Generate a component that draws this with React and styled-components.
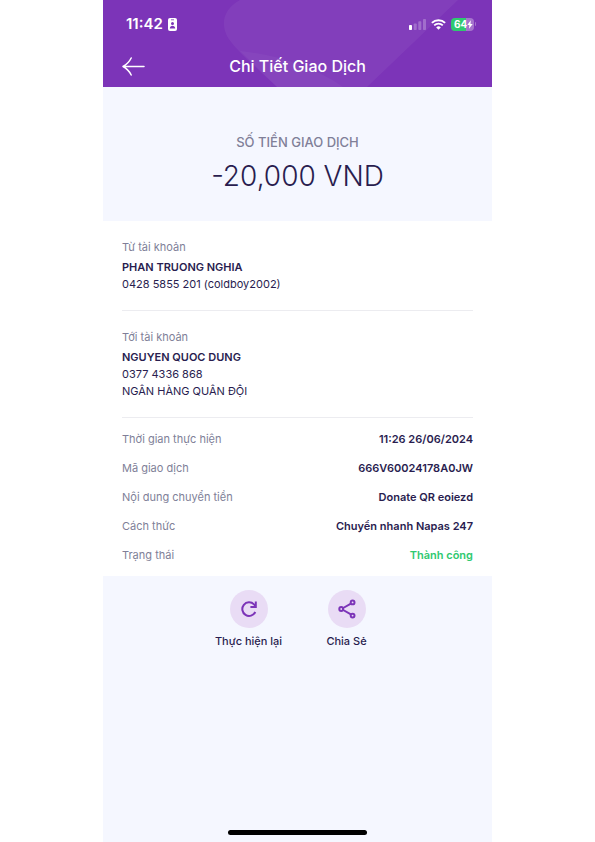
import React from "react";
import styled, { createGlobalStyle } from "styled-components";

const color = {
  purple: "#7c34b8",
  ink: "#291d4f",
  muted: "#807f98",
  wash: "#f5f7ff",
  lilac: "#e9dcf5",
  green: "#2fc970",
};

const GlobalStyle = createGlobalStyle`
  *, *::before, *::after { box-sizing: border-box; }
  body {
    margin: 0;
    background: #fff;
    color: ${color.ink};
    font-family: Inter, "Noto Sans", sans-serif;
    font-size: 11px;
    line-height: 18px;
  }
  h1, h2, p, dl, dt, dd { margin: 0; font-weight: inherit; }
`;

const Screen = styled.div`
  display: flex;
  flex-direction: column;
  width: 100%;
  max-width: 389px;
  min-height: 100vh;
  margin: 0 auto;
  background: ${color.wash};
`;

const Header = styled.header`
  position: relative;
  overflow: hidden;
  padding-top: 12px;
  background: ${color.purple};
  color: #fff;
`;

const HeaderPattern = styled.svg`
  position: absolute;
  inset: 0;
  width: 100%;
  height: 100%;
`;

const StatusBar = styled.div`
  position: relative;
  display: flex;
  align-items: center;
  justify-content: space-between;
  height: 24px;
  padding: 0 16px 0 23px;
`;

const StatusGroup = styled.div`
  display: flex;
  align-items: center;
  gap: 5px;
`;

const Clock = styled.span`
  font-size: 15px;
  font-weight: 600;
`;

const Battery = styled.span`
  display: flex;
  align-items: center;
  gap: 1px;
`;

const BatteryBody = styled.span`
  display: flex;
  align-items: center;
  width: 23px;
  height: 13px;
  padding-left: 3px;
  border-radius: 4px;
  background: linear-gradient(90deg, ${color.green} 66%, #a573cd 66%);
  font-size: 10px;
  line-height: 13px;
  font-weight: 700;
`;

const BatteryTip = styled.span`
  width: 1px;
  height: 4px;
  border-radius: 0 1px 1px 0;
  background: #a573cd;
`;

const TitleBar = styled.div`
  position: relative;
  display: grid;
  grid-template-columns: 24px 1fr 24px;
  align-items: center;
  padding: 18px 19px 9px;
`;

const BackButton = styled.button`
  display: flex;
  padding: 0;
  border: 0;
  background: none;
  color: inherit;
  cursor: pointer;
`;

const Title = styled.h1`
  font-size: 16px;
  line-height: 24px;
  font-weight: 500;
  text-align: center;
`;

const Amount = styled.section`
  padding: 45px 19px 25px;
  text-align: center;
`;

const AmountLabel = styled.h2`
  color: ${color.muted};
  font-size: 13px;
  line-height: 20px;
  font-weight: 500;
`;

const AmountValue = styled.p`
  margin-top: 4px;
  font-size: 28px;
  line-height: 40px;
  font-weight: 300;
`;

const Details = styled.main`
  padding: 0 19px;
  background: #fff;
`;

const Account = styled.section`
  padding: 17px 0;
  border-bottom: 1px solid #ececf0;
`;

const AccountLabel = styled.h2`
  margin-bottom: 3px;
  color: ${color.muted};
  font-size: 11px;
`;

const AccountLine = styled.p`
  line-height: 17px;
`;

const AccountName = styled(AccountLine)`
  font-weight: 600;
`;

const Facts = styled.dl`
  display: flex;
  flex-direction: column;
  gap: 11px;
  padding: 12px 0;
`;

const Fact = styled.div`
  display: flex;
  justify-content: space-between;
  gap: 16px;
`;

const FactLabel = styled.dt`
  color: ${color.muted};
`;

const FactValue = styled.dd`
  color: ${(p) => (p.$success ? color.green : color.ink)};
  font-weight: 600;
  text-align: right;
`;

const Actions = styled.nav`
  display: flex;
  justify-content: center;
  gap: 14px;
  padding-top: 14px;
`;

const Action = styled.button`
  display: flex;
  flex-direction: column;
  align-items: center;
  gap: 4px;
  width: 84px;
  padding: 0;
  border: 0;
  background: none;
  color: ${color.ink};
  font: inherit;
  font-weight: 500;
  white-space: nowrap;
  cursor: pointer;
`;

const ActionIcon = styled.span`
  display: grid;
  place-items: center;
  width: 38px;
  height: 38px;
  border-radius: 50%;
  background: ${color.lilac};
  color: ${color.purple};
`;

const HomeIndicator = styled.div`
  width: 139px;
  height: 5px;
  margin: auto auto 7px;
  border-radius: 3px;
  background: #000;
`;

const facts = [
  { label: "Thời gian thực hiện", value: "11:26 26/06/2024" },
  { label: "Mã giao dịch", value: "666V60024178A0JW" },
  { label: "Nội dung chuyển tiền", value: "Donate QR eoiezd" },
  { label: "Cách thức", value: "Chuyển nhanh Napas 247" },
  { label: "Trạng thái", value: "Thành công", success: true },
];

const Pattern = () => (
  <HeaderPattern viewBox="0 0 389 87" preserveAspectRatio="none" aria-hidden="true">
    <path d="M137 0C122 8 117 22 124 36C130 47 151 66 174 87H264L355 0Z" fill="#fff" fillOpacity="0.05" />
    <path d="M137 51C175 55 211 67 240 87H174Z" fill="#fff" fillOpacity="0.04" />
  </HeaderPattern>
);

const IdIcon = () => (
  <svg width="9" height="13" viewBox="0 0 9 13" aria-hidden="true">
    <rect width="9" height="13" rx="2" fill="#fff" />
    <path d="M3 1.8h3" stroke={color.purple} strokeWidth="0.8" />
    <circle cx="4.5" cy="5.5" r="1.5" fill={color.purple} />
    <path d="M1.8 10.6c0-3.8 5.4-3.8 5.4 0z" fill={color.purple} />
  </svg>
);

const SignalIcon = () => (
  <svg width="17" height="11" viewBox="0 0 17 11" fill="#fff" aria-label="Sóng di động" role="img">
    <rect y="6" width="3" height="5" rx="0.8" />
    <g fillOpacity="0.25">
      <rect x="4.7" y="4.5" width="3" height="6.5" rx="0.8" />
      <rect x="9.3" y="2.3" width="3" height="8.7" rx="0.8" />
      <rect x="14" width="3" height="11" rx="0.8" />
    </g>
  </svg>
);

const WifiIcon = () => (
  <svg width="15" height="11" viewBox="0 0 15 11" fill="none" stroke="#fff" aria-label="Wi-Fi" role="img">
    <path d="M.9 3.9a9.4 9.4 0 0 1 13.2 0" strokeWidth="2" />
    <path d="M3.2 6.4a6.1 6.1 0 0 1 8.6 0" strokeWidth="1.8" />
    <path d="M5.2 8.4a3.3 3.3 0 0 1 4.6 0L7.5 10.8z" fill="#fff" stroke="none" />
  </svg>
);

const BoltIcon = () => (
  <svg width="6" height="9" viewBox="0 0 6 9" fill="#fff" aria-hidden="true">
    <path d="M3.8.3L.3 4.9h2.1L2 8.7l3.7-4.8H3.5z" />
  </svg>
);

const BackIcon = () => (
  <svg width="23" height="19" viewBox="0 0 23 19" fill="none" stroke="currentColor" strokeWidth="1.5" strokeLinecap="round" strokeLinejoin="round" aria-hidden="true">
    <path d="M22 9.5H1M9.2 1C7.5 4.5 4.8 7.5 1 9.5C4.8 11.5 7.5 14.5 9.2 18" />
  </svg>
);

const RepeatIcon = () => (
  <svg width="18" height="18" viewBox="0 0 18 18" fill="none" stroke="currentColor" strokeWidth="2" aria-hidden="true">
    <path d="M15.3 12A6.8 6.8 0 1 1 14 4.4L15.5 6" />
    <path d="M15.8 1.6V7H10.4" />
  </svg>
);

const ShareIcon = () => (
  <svg width="18" height="20" viewBox="0 0 18 20" fill="none" stroke="currentColor" strokeWidth="2" aria-hidden="true">
    <path d="M5.2 9L12.9 4.6M5.2 11L12.9 15.4" />
    <circle cx="3.2" cy="10" r="1.9" />
    <circle cx="14.6" cy="3.4" r="1.9" />
    <circle cx="14.6" cy="16.6" r="1.9" />
  </svg>
);

export default function App() {
  return (
    <>
      <GlobalStyle />
      <Screen>
        <Header>
          <Pattern />
          <StatusBar>
            <StatusGroup>
              <Clock>11:42</Clock>
              <IdIcon />
            </StatusGroup>
            <StatusGroup>
              <SignalIcon />
              <WifiIcon />
              <Battery>
                <BatteryBody>
                  64
                  <BoltIcon />
                </BatteryBody>
                <BatteryTip />
              </Battery>
            </StatusGroup>
          </StatusBar>
          <TitleBar>
            <BackButton type="button" aria-label="Quay lại">
              <BackIcon />
            </BackButton>
            <Title>Chi Tiết Giao Dịch</Title>
          </TitleBar>
        </Header>

        <Amount>
          <AmountLabel>SỐ TIỀN GIAO DỊCH</AmountLabel>
          <AmountValue>-20,000 VND</AmountValue>
        </Amount>

        <Details>
          <Account>
            <AccountLabel>Từ tài khoản</AccountLabel>
            <AccountName>PHAN TRUONG NGHIA</AccountName>
            <AccountLine>0428 5855 201 (coldboy2002)</AccountLine>
          </Account>
          <Account>
            <AccountLabel>Tới tài khoản</AccountLabel>
            <AccountName>NGUYEN QUOC DUNG</AccountName>
            <AccountLine>0377 4336 868</AccountLine>
            <AccountLine>NGÂN HÀNG QUÂN ĐỘI</AccountLine>
          </Account>
          <Facts>
            {facts.map((f) => (
              <Fact key={f.label}>
                <FactLabel>{f.label}</FactLabel>
                <FactValue $success={f.success}>{f.value}</FactValue>
              </Fact>
            ))}
          </Facts>
        </Details>

        <Actions aria-label="Thao tác">
          <Action type="button">
            <ActionIcon>
              <RepeatIcon />
            </ActionIcon>
            Thực hiện lại
          </Action>
          <Action type="button">
            <ActionIcon>
              <ShareIcon />
            </ActionIcon>
            Chia Sẻ
          </Action>
        </Actions>

        <HomeIndicator />
      </Screen>
    </>
  );
}
